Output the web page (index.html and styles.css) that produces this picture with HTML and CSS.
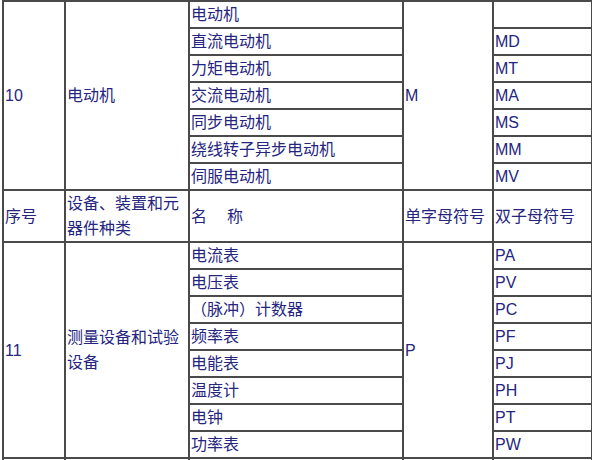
FILE: index.html
```html
<!DOCTYPE html>
<html lang="zh">
<head>
<meta charset="utf-8">
<title>电气设备文字符号</title>
<link rel="stylesheet" href="styles.css">
</head>
<body>
<table class="codes">
  <colgroup>
    <col class="c-no">
    <col class="c-kind">
    <col class="c-name">
    <col class="c-single">
    <col class="c-double">
  </colgroup>
  <tbody>
    <tr>
      <td rowspan="7">10</td>
      <td rowspan="7">电动机</td>
      <td>电动机</td>
      <td rowspan="7">M</td>
      <td></td>
    </tr>
    <tr><td>直流电动机</td><td>MD</td></tr>
    <tr><td>力矩电动机</td><td>MT</td></tr>
    <tr><td>交流电动机</td><td>MA</td></tr>
    <tr><td>同步电动机</td><td>MS</td></tr>
    <tr><td>绕线转子异步电动机</td><td>MM</td></tr>
    <tr><td>伺服电动机</td><td>MV</td></tr>
    <tr class="head">
      <td>序号</td>
      <td>设备、装置和元器件种类</td>
      <td>名<span class="gap"></span>称</td>
      <td>单字母符号</td>
      <td>双子母符号</td>
    </tr>
    <tr>
      <td rowspan="8">11</td>
      <td rowspan="8">测量设备和试验设备</td>
      <td>电流表</td>
      <td rowspan="8">P</td>
      <td>PA</td>
    </tr>
    <tr><td>电压表</td><td>PV</td></tr>
    <tr><td>（脉冲）计数器</td><td>PC</td></tr>
    <tr><td>频率表</td><td>PF</td></tr>
    <tr><td>电能表</td><td>PJ</td></tr>
    <tr><td>温度计</td><td>PH</td></tr>
    <tr><td>电钟</td><td>PT</td></tr>
    <tr><td>功率表</td><td>PW</td></tr>
    <tr class="next">
      <td></td>
      <td></td>
      <td></td>
      <td></td>
      <td></td>
    </tr>
  </tbody>
</table>
</body>
</html>
```
FILE: styles.css
```css
html, body {
  margin: 0;
  padding: 0;
  background: #ffffff;
}

body {
  padding-left: 2px;
}

.codes {
  border-collapse: collapse;
  table-layout: fixed;
  width: 589px;
  font-family: "Liberation Sans", "Noto Sans CJK SC", sans-serif;
  font-size: 16px;
  line-height: 25px;
  color: #25257f;
}

.c-no { width: 62px; }
.c-kind { width: 124px; }
.c-name { width: 214px; }
.c-single { width: 90px; }
.c-double { width: 99px; }

.codes td {
  border: 2px solid #4a4a4a;
  padding: 0 1px;
  height: 25px;
  vertical-align: middle;
  text-align: left;
  white-space: normal;
  overflow: hidden;
}

.head td {
  height: 49px;
}

.gap {
  display: inline-block;
  width: 20px;
}
```
